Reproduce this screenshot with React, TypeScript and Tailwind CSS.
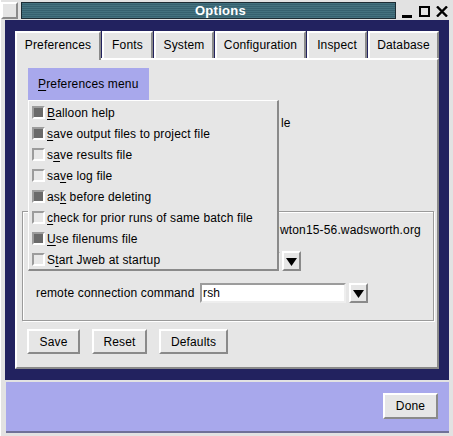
import React from "react";

function Check({ on }: { on: boolean }) {
  return (
    <span
      className={
        on
          ? "block w-[13px] h-[13px] shrink-0 bg-[#6a6a6a] border-2 border-t-[#9c9c9c] border-l-[#9c9c9c] border-b-white border-r-white"
          : "block w-[13px] h-[13px] shrink-0 bg-[#e8e8e8] border-2 border-t-[#9c9c9c] border-l-[#9c9c9c] border-b-white border-r-white"
      }
    />
  );
}

function Item({ on, pre, u, post }: { on: boolean; pre: string; u: string; post: string }) {
  return (
    <div className="h-[21px] flex items-center pl-[3px]">
      <Check on={on} />
      <span className="ml-[2px] whitespace-pre">
        {pre}
        <span className="underline underline-offset-[2px]">{u}</span>
        {post}
      </span>
    </div>
  );
}

function Arrow() {
  return (
    <div className="w-[19px] h-[20px] bg-[#e6e6e6] border-2 border-t-white border-l-white border-b-[#8a8a8a] border-r-[#8a8a8a] flex items-center justify-center">
      <svg width="11" height="9" viewBox="0 0 11 9">
        <polygon points="0,1 11,1 5.5,9" fill="#000" />
      </svg>
    </div>
  );
}

function Btn({ w, label }: { w: string; label: string }) {
  return (
    <div
      className={
        "h-[25px] bg-[#e6e6e6] border-2 border-t-white border-l-white border-b-[#8a8a8a] border-r-[#8a8a8a] flex items-center justify-center " +
        w
      }
    >
      {label}
    </div>
  );
}

export default function App() {
  return (
    <div className="w-[453px] h-[436px] bg-[#e2e2e2] flex flex-col overflow-hidden font-['Liberation_Sans',Arial,sans-serif] text-[12px] tracking-[0.15px] text-black border-l border-l-white">
      {/* title row */}
      <div className="h-[20px] shrink-0 flex items-start pt-[2px]">
        <div className="w-[17px] h-[17px] bg-[#e4e4e4] border-2 border-t-white border-l-white border-b-[#8a8a8a] border-r-[#8a8a8a]" />
        <div className="ml-[3px] w-[375px] h-[17px] border border-[#1c2c34] bg-[repeating-linear-gradient(180deg,#44727f_0px,#44727f_1px,#36616f_1px,#36616f_2px)] flex items-center justify-center pl-[24px]">
          <span className="text-white font-bold text-[13px] tracking-[0.3px]">Options</span>
        </div>
        <div className="ml-[6px] flex items-center h-[17px]">
          <svg width="10" height="14" viewBox="0 0 10 14" className="mt-[2px]">
            <rect x="0" y="10" width="10" height="3" fill="#000" />
          </svg>
          <svg width="11" height="11" viewBox="0 0 11 11" className="ml-[7px] mt-[1px]">
            <rect x="1" y="1" width="9" height="9" fill="none" stroke="#000" strokeWidth="2" />
          </svg>
          <svg width="12" height="11" viewBox="0 0 12 11" className="ml-[6px] mt-[1px]">
            <path d="M1,0.5 L11,10.5 M11,0.5 L1,10.5" stroke="#000" strokeWidth="2.4" />
          </svg>
        </div>
      </div>

      {/* navy body */}
      <div className="mx-[4px] h-[360px] shrink-0 bg-[#22225f] pt-[11px] pl-[10px]">
        {/* tabs */}
        <div className="flex items-end h-[27px] gap-[1px]">
          <div className="relative z-10 w-[86px] h-[29px] -mb-[2px] bg-[#e6e6e6] border-t-2 border-l-2 border-r-2 border-t-white border-l-white border-r-[#8a8a8a] flex items-start justify-center pt-[3px]">
            Preferences
          </div>
          <div className="w-[51px] h-[27px] bg-[#e6e6e6] border-t-2 border-l-2 border-r-2 border-t-white border-l-white border-r-[#8a8a8a] flex items-start justify-center pt-[3px]">
            Fonts
          </div>
          <div className="w-[60px] h-[27px] bg-[#e6e6e6] border-t-2 border-l-2 border-r-2 border-t-white border-l-white border-r-[#8a8a8a] flex items-start justify-center pt-[3px]">
            System
          </div>
          <div className="w-[91px] h-[27px] bg-[#e6e6e6] border-t-2 border-l-2 border-r-2 border-t-white border-l-white border-r-[#8a8a8a] flex items-start justify-center pt-[3px]">
            Configuration
          </div>
          <div className="w-[60px] h-[27px] bg-[#e6e6e6] border-t-2 border-l-2 border-r-2 border-t-white border-l-white border-r-[#8a8a8a] flex items-start justify-center pt-[3px]">
            Inspect
          </div>
          <div className="w-[71px] h-[27px] bg-[#e6e6e6] border-t-2 border-l-2 border-r-2 border-t-white border-l-white border-r-[#8a8a8a] flex items-start justify-center pt-[3px]">
            Database
          </div>
        </div>

        {/* panel */}
        <div className="relative w-[424px] h-[311px] bg-[#e6e6e6] border-2 border-t-white border-l-white border-b-[#8a8a8a] border-r-[#8a8a8a] flex flex-col">
          <div className="ml-[11px] mt-[8px] w-[121px] h-[32px] bg-[#a8a8ec] flex items-center pl-[10px]">
            <span>
              <span className="underline underline-offset-[2px]">P</span>references menu
            </span>
          </div>

          <div className="h-[111px] pt-[14px] pl-[264px]">
            <span>le</span>
          </div>

          {/* group box */}
          <div className="ml-[5px] w-[412px] h-[110px] border border-[#9a9a9a] shadow-[inset_1px_1px_0_#ffffff,1px_1px_0_#ffffff] flex flex-col">
            <div className="mt-[10px] h-[16px] flex items-center pl-[257px]">
              <span>wton15-56.wadsworth.org</span>
            </div>
            <div className="mt-[14px] h-[19px] flex items-center pl-[13px]">
              <span className="w-[164px]" />
              <div className="w-[80px] h-[19px] bg-white border-2 border-t-[#9c9c9c] border-l-[#9c9c9c] border-b-[#eeeeee] border-r-[#eeeeee]" />
              <div className="ml-[2px] -mt-[1px]">
                <Arrow />
              </div>
            </div>
            <div className="mt-[12px] h-[20px] flex items-center pl-[13px]">
              <span className="w-[164px]">remote connection command</span>
              <div className="w-[146px] h-[20px] bg-white border-2 border-t-[#9c9c9c] border-l-[#9c9c9c] border-b-[#eeeeee] border-r-[#eeeeee] flex items-center pl-[1px]">
                rsh
              </div>
              <div className="ml-[3px]">
                <Arrow />
              </div>
            </div>
          </div>

          {/* buttons */}
          <div className="mt-[8px] ml-[10px] flex gap-[12px]">
            <Btn w="w-[53px]" label="Save" />
            <Btn w="w-[55px]" label="Reset" />
            <Btn w="w-[69px]" label="Defaults" />
          </div>

          {/* dropdown menu */}
          <div className="absolute left-[11px] top-[40px] w-[251px] h-[171px] bg-[#e6e6e6] border-t border-l border-t-white border-l-white border-r-2 border-b-2 border-r-[#8a8a8a] border-b-[#8a8a8a] pt-[1px] z-20">
            <Item on={true} pre="" u="B" post="alloon help" />
            <Item on={true} pre="" u="s" post="ave output files to project file" />
            <Item on={false} pre="s" u="a" post="ve results file" />
            <Item on={false} pre="sa" u="v" post="e log file" />
            <Item on={true} pre="as" u="k" post=" before deleting" />
            <Item on={false} pre="" u="c" post="heck for prior runs of same batch file" />
            <Item on={true} pre="" u="U" post="se filenums file" />
            <Item on={false} pre="S" u="t" post="art Jweb at startup" />
          </div>
        </div>
      </div>

      {/* bottom lavender bar */}
      <div className="mt-[2px] ml-[5px] mr-[4px] h-[51px] shrink-0 bg-[#a8a8ec] border-b-2 border-b-[#707098] flex justify-end items-start pt-[11px] pr-[11px]">
        <div className="w-[55px] h-[26px] bg-[#e6e6e6] border-2 border-t-white border-l-white border-b-[#8a8a8a] border-r-[#8a8a8a] flex items-center justify-center">
          Done
        </div>
      </div>
    </div>
  );
}
